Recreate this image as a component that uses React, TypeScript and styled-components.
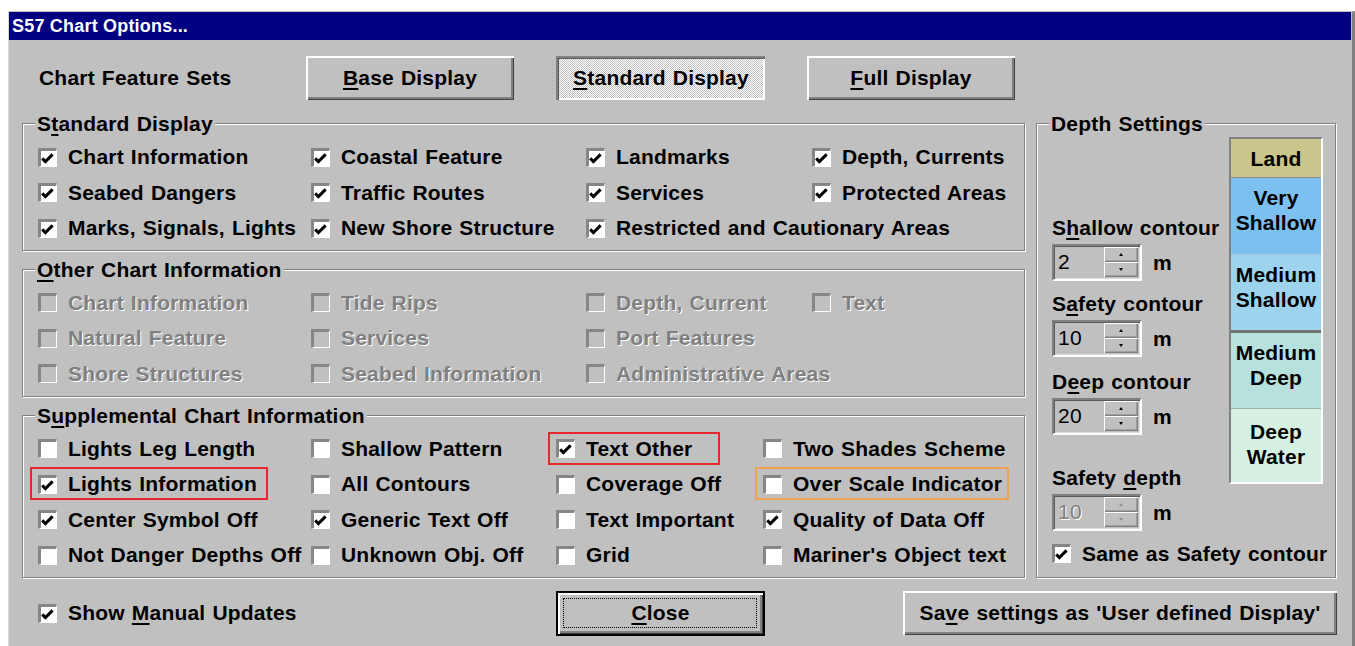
import React from "react";
import styled, { createGlobalStyle, css } from "styled-components";

const GlobalStyle = createGlobalStyle`
  html, body { margin: 0; padding: 0; background: #ffffff; }
  body { overflow: hidden; font-family: "Liberation Sans", Arial, sans-serif; }
  *, *::before, *::after { box-sizing: border-box; }
`;

const Page = styled.div`
  padding: 11px 0 0 8px;
`;

const Window = styled.div`
  width: 1347px;
  height: 660px;
  background: #c0c0c0;
  border-top: 1px solid #c4c4c4;
  border-left: 1px solid #d8d8d8;
  border-right: 3px solid #808080;
  color: #000;
  font: bold 21px/24px "Liberation Sans", Arial, sans-serif;
  letter-spacing: 0.2px;
  word-spacing: 1px;
`;

const TitleBar = styled.div`
  height: 28px;
  margin-right: 1px;
  padding-left: 3px;
  background: #000080;
  color: #fff;
  font-size: 18px;
  line-height: 28px;
  word-spacing: 0;
`;

const Body = styled.div`
  padding: 16px 0 0 13px;
`;

const Key = styled.span`
  text-decoration: underline;
  text-decoration-thickness: 2px;
  text-underline-offset: 3px;
`;

/* ---------- buttons ---------- */

const Button = styled.button<{ $w: number; $h?: number; $pressed?: boolean; $default?: boolean }>`
  position: relative;
  width: ${(p) => p.$w}px;
  height: ${(p) => p.$h ?? 44}px;
  margin: 0;
  padding: 0;
  border: 0;
  font: inherit;
  letter-spacing: inherit;
  word-spacing: inherit;
  color: #000;
  background: #c0c0c0;
  box-shadow: inset 2px 2px 0 #ffffff, inset -1px -1px 0 #404040, inset -3px -3px 0 #808080;
  flex: none;
  ${(p) =>
    p.$pressed &&
    css`
      padding: 0 0 0 1px;
      background: repeating-conic-gradient(#ffffff 0 25%, #c0c0c0 0 50%) 0 0 / 2px 2px;
      box-shadow: inset 2px 2px 0 #808080, inset 3px 3px 0 #5a5a5a, inset -2px -2px 0 #ffffff;
    `}
  ${(p) =>
    p.$default &&
    css`
      border: 2px solid #000;
      &::after {
        content: "";
        position: absolute;
        inset: 5px 6px 6px 5px;
        border: 1px dotted #000;
      }
    `}
`;

const TopRow = styled.div`
  display: flex;
  align-items: center;
  gap: 42px;
  height: 44px;
  padding-left: 17px;
`;

const RowLabel = styled.div`
  width: 225px;
`;

/* ---------- group boxes ---------- */

const MainRow = styled.div`
  display: flex;
  align-items: stretch;
  gap: 11px;
  margin-top: 23px;
`;

const LeftColumn = styled.div`
  width: 1003px;
  display: flex;
  flex-direction: column;
  gap: 18px;
`;

const Group = styled.section`
  border: 1px solid #808080;
  box-shadow: inset 1px 1px 0 #ffffff, 1px 1px 0 #ffffff;
  padding: 0 0 4px 15px;
`;

const Caption = styled.div`
  width: max-content;
  margin: -12px 0 0 -3px;
  padding: 0 2px;
  background: #c0c0c0;
  line-height: 24px;
  white-space: nowrap;
`;

const OptionGrid = styled.div<{ $cols: string }>`
  display: grid;
  grid-template-columns: ${(p) => p.$cols};
  grid-auto-rows: 35.5px;
  margin-top: 3.25px;
`;

type Mark = { color: string; left: number; width: number };

const CheckItem = styled.label<{ $disabled?: boolean; $mark?: Mark }>`
  position: relative;
  justify-self: start;
  align-self: center;
  display: inline-flex;
  align-items: center;
  gap: 11px;
  height: 35.5px;
  white-space: nowrap;
  color: ${(p) => (p.$disabled ? "#808080" : "#000")};
  text-shadow: ${(p) => (p.$disabled ? "1px 1px 0 #ffffff" : "none")};
  ${(p) =>
    p.$mark &&
    css`
      &::after {
        content: "";
        position: absolute;
        left: ${p.$mark.left}px;
        width: ${p.$mark.width}px;
        top: 1px;
        bottom: 1.5px;
        border: 2px solid ${p.$mark.color};
      }
    `}
`;

const Box = styled.span<{ $disabled?: boolean }>`
  flex: none;
  width: 19px;
  height: 19px;
  display: inline-flex;
  align-items: flex-start;
  justify-content: flex-start;
  background: ${(p) => (p.$disabled ? "#c0c0c0" : "#ffffff")};
  border-top: 3px solid #868686;
  border-left: 3px solid #868686;
  border-right: 1px solid #ffffff;
  border-bottom: 1px solid #ffffff;
`;

const Tick = () => (
  <svg width="15" height="15" viewBox="0 0 15 15">
    <path d="M1.2 7.4 L4.4 10.6 L11.6 3.4" fill="none" stroke="#000" strokeWidth="3" />
  </svg>
);

type Opt = { label: React.ReactNode; checked?: boolean; mark?: Mark } | null;

const Option = ({ opt, disabled }: { opt: Opt; disabled?: boolean }) => {
  if (!opt) return <span />;
  return (
    <CheckItem $disabled={disabled} $mark={opt.mark}>
      <Box $disabled={disabled}>{opt.checked && <Tick />}</Box>
      <span>{opt.label}</span>
    </CheckItem>
  );
};

/* ---------- depth settings ---------- */

const DepthGroup = styled(Group)`
  width: 300px;
  padding: 0 12px 0 15px;
  display: flex;
  flex-direction: column;
`;

const DepthBody = styled.div`
  display: flex;
  align-items: flex-start;
`;

const Controls = styled.div`
  width: 177px;
  display: flex;
  flex-direction: column;
`;

const FieldLabel = styled.div<{ $top: number }>`
  margin-top: ${(p) => p.$top}px;
  line-height: 24px;
  white-space: nowrap;
`;

const SpinRow = styled.div`
  display: flex;
  align-items: center;
  gap: 11px;
  margin-top: 4px;
`;

const SpinField = styled.div<{ $disabled?: boolean }>`
  width: 90px;
  height: 37px;
  display: flex;
  align-items: stretch;
  padding: 1px 2px 2px 4px;
  border-top: 2px solid #808080;
  border-left: 2px solid #808080;
  border-right: 2px solid #ffffff;
  border-bottom: 2px solid #ffffff;
  box-shadow: inset 1px 1px 0 #5a5a5a, inset -1px -1px 0 #dfdfdf;
  color: ${(p) => (p.$disabled ? "#808080" : "#000")};
  text-shadow: ${(p) => (p.$disabled ? "1px 1px 0 #ffffff" : "none")};
`;

const SpinValue = styled.span`
  flex: 1;
  display: flex;
  align-items: center;
  font-weight: normal;
`;

const SpinButtons = styled.div`
  width: 34px;
  display: flex;
  flex-direction: column;
`;

const SpinButton = styled.span<{ $down?: boolean; $disabled?: boolean }>`
  flex: 1;
  display: flex;
  align-items: center;
  justify-content: center;
  background: #c0c0c0;
  box-shadow: inset 1px 1px 0 #ffffff, inset -1px -1px 0 #808080, inset -2px -2px 0 #a0a0a0;
  &::before {
    content: "";
    width: 0;
    height: 0;
    border-left: 2.5px solid transparent;
    border-right: 2.5px solid transparent;
    ${(p) =>
      p.$down
        ? css`border-top: 3px solid ${p.$disabled ? "#909090" : "#000"};`
        : css`border-bottom: 3px solid ${p.$disabled ? "#909090" : "#000"};`}
  }
`;

const Unit = styled.span``;

const Spin = ({ value, disabled }: { value: string; disabled?: boolean }) => (
  <SpinRow>
    <SpinField $disabled={disabled}>
      <SpinValue>{value}</SpinValue>
      <SpinButtons>
        <SpinButton $disabled={disabled} />
        <SpinButton $down $disabled={disabled} />
      </SpinButtons>
    </SpinField>
    <Unit>m</Unit>
  </SpinRow>
);

const DepthCheck = styled.div`
  margin-top: 5px;
  display: flex;
`;

const ColourScale = styled.div`
  width: 94px;
  margin-top: 1px;
  display: flex;
  flex-direction: column;
  border: 2px solid;
  border-color: #808080 #ffffff #ffffff #808080;
`;

const Band = styled.div<{ $bg: string; $h: number; $pad: number; $sep?: string; $sepW?: number }>`
  height: ${(p) => p.$h + (p.$sep ? p.$sepW ?? 1 : 0)}px;
  padding-top: ${(p) => p.$pad}px;
  background: ${(p) => p.$bg};
  border-bottom: ${(p) => (p.$sep ? `${p.$sepW ?? 1}px solid ${p.$sep}` : "none")};
  text-align: center;
  line-height: 25px;
`;

/* ---------- bottom row ---------- */

const BottomRow = styled.div`
  display: flex;
  align-items: center;
  height: 45px;
  margin-top: 13px;
  padding-left: 16px;
`;

const BottomLeft = styled.div`
  width: 518px;
  display: flex;
`;

const SaveButton = styled(Button)`
  margin-left: 138px;
`;

/* ---------- data ---------- */

const standardRows: Opt[][] = [
  [
    { label: "Chart Information", checked: true },
    { label: "Coastal Feature", checked: true },
    { label: "Landmarks", checked: true },
    { label: "Depth, Currents", checked: true },
  ],
  [
    { label: "Seabed Dangers", checked: true },
    { label: "Traffic Routes", checked: true },
    { label: "Services", checked: true },
    { label: "Protected Areas", checked: true },
  ],
  [
    { label: "Marks, Signals, Lights", checked: true },
    { label: "New Shore Structure", checked: true },
    { label: "Restricted and Cautionary Areas", checked: true },
    null,
  ],
];

const otherRows: Opt[][] = [
  [{ label: "Chart Information" }, { label: "Tide Rips" }, { label: "Depth, Current" }, { label: "Text" }],
  [{ label: "Natural Feature" }, { label: "Services" }, { label: "Port Features" }, null],
  [{ label: "Shore Structures" }, { label: "Seabed Information" }, { label: "Administrative Areas" }, null],
];

const RED = "#e8262c";
const ORANGE = "#f2a14e";

const supplementalRows: Opt[][] = [
  [
    { label: "Lights Leg Length" },
    { label: "Shallow Pattern" },
    { label: "Text Other", checked: true, mark: { color: RED, left: -8, width: 172 } },
    { label: "Two Shades Scheme" },
  ],
  [
    { label: "Lights Information", checked: true, mark: { color: RED, left: -8, width: 238 } },
    { label: "All Contours" },
    { label: "Coverage Off" },
    { label: "Over Scale Indicator", mark: { color: ORANGE, left: -8, width: 254 } },
  ],
  [
    { label: "Center Symbol Off", checked: true },
    { label: "Generic Text Off", checked: true },
    { label: "Text Important" },
    { label: "Quality of Data Off", checked: true },
  ],
  [
    { label: "Not Danger Depths Off" },
    { label: "Unknown Obj. Off" },
    { label: "Grid" },
    { label: "Mariner's Object text" },
  ],
];

const OptionSet = ({ rows, cols, disabled }: { rows: Opt[][]; cols: string; disabled?: boolean }) => (
  <OptionGrid $cols={cols}>
    {rows.flat().map((opt, i) => (
      <Option key={i} opt={opt} disabled={disabled} />
    ))}
  </OptionGrid>
);

export default function App() {
  return (
    <Page>
      <GlobalStyle />
      <Window>
        <TitleBar>S57 Chart Options...</TitleBar>
        <Body>
          <TopRow>
            <RowLabel>Chart Feature Sets</RowLabel>
            <Button $w={208}>
              <Key>B</Key>ase Display
            </Button>
            <Button $w={209} $pressed>
              <Key>S</Key>tandard Display
            </Button>
            <Button $w={208}>
              <Key>F</Key>ull Display
            </Button>
          </TopRow>

          <MainRow>
            <LeftColumn>
              <Group>
                <Caption>
                  S<Key>t</Key>andard Display
                </Caption>
                <OptionSet rows={standardRows} cols="273px 275px 226px 1fr" />
              </Group>
              <Group>
                <Caption>
                  <Key>O</Key>ther Chart Information
                </Caption>
                <OptionSet rows={otherRows} cols="273px 275px 226px 1fr" disabled />
              </Group>
              <Group>
                <Caption>
                  S<Key>u</Key>pplemental Chart Information
                </Caption>
                <OptionSet rows={supplementalRows} cols="273px 245px 207px 1fr" />
              </Group>
            </LeftColumn>

            <DepthGroup>
              <Caption>Depth Settings</Caption>
              <DepthBody>
                <Controls>
                  <FieldLabel $top={80}>
                    S<Key>h</Key>allow contour
                  </FieldLabel>
                  <Spin value="2" />
                  <FieldLabel $top={11}>
                    S<Key>a</Key>fety contour
                  </FieldLabel>
                  <Spin value="10" />
                  <FieldLabel $top={13}>
                    D<Key>e</Key>ep contour
                  </FieldLabel>
                  <Spin value="20" />
                  <FieldLabel $top={31}>
                    Safety <Key>d</Key>epth
                  </FieldLabel>
                  <Spin value="10" disabled />
                  <DepthCheck>
                    <Option opt={{ label: "Same as Safety contour", checked: true }} />
                  </DepthCheck>
                </Controls>
                <ColourScale>
                  <Band $bg="#c9c58b" $h={38} $pad={6.5} $sep="#8a8a7a">
                    Land
                  </Band>
                  <Band $bg="#7cc0f0" $h={76} $pad={7} $sep="#a2c6dc">
                    Very
                    <br />
                    Shallow
                  </Band>
                  <Band $bg="#9dd3ec" $h={75} $pad={7} $sep="#6c7474" $sepW={3}>
                    Medium
                    <br />
                    Shallow
                  </Band>
                  <Band $bg="#b6e1dd" $h={75} $pad={7} $sep="#9ab4b2">
                    Medium
                    <br />
                    Deep
                  </Band>
                  <Band $bg="#d6f1e1" $h={73} $pad={9.5}>
                    Deep
                    <br />
                    Water
                  </Band>
                </ColourScale>
              </DepthBody>
            </DepthGroup>
          </MainRow>

          <BottomRow>
            <BottomLeft>
              <Option
                opt={{
                  label: (
                    <>
                      Show <Key>M</Key>anual Updates
                    </>
                  ),
                  checked: true,
                }}
              />
            </BottomLeft>
            <Button $w={209} $h={45} $default>
              <Key>C</Key>lose
            </Button>
            <SaveButton $w={434}>
              Sa<Key>v</Key>e settings as 'User defined Display'
            </SaveButton>
          </BottomRow>
        </Body>
      </Window>
    </Page>
  );
}
